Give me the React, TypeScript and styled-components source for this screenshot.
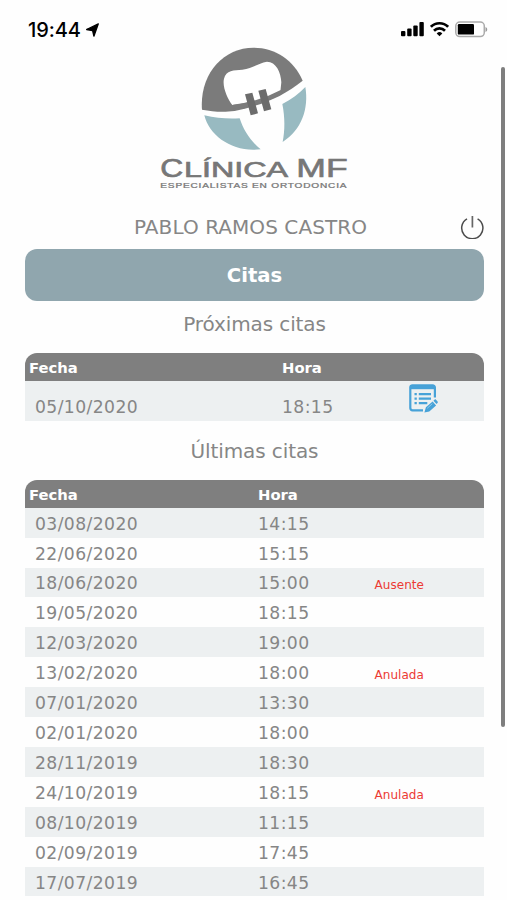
import React from 'react';
import styled, { createGlobalStyle } from 'styled-components';

const GlobalStyle = createGlobalStyle`
  * { box-sizing: border-box; }
  html, body { margin: 0; padding: 0; background: #fefefe; }
  body { font-family: "DejaVu Sans", Verdana, sans-serif; color: #868686; overflow: hidden; }
`;

const Screen = styled.div`
  position: relative;
  width: 507px;
  height: 900px;
  overflow: hidden;
  display: flex;
  flex-direction: column;
  background: #fefefe;
`;

const StatusBar = styled.header`
  display: flex;
  justify-content: space-between;
  align-items: center;
  height: 40px;
  padding: 18px 19px 0 28px;
  flex: none;
`;

const Clock = styled.div`
  display: flex;
  align-items: center;
  gap: 5px;
  padding-top: 1px;
  color: #000;
  font: 500 20px/22px Inter, "Liberation Sans", sans-serif;
  letter-spacing: -0.1px;
`;

const StatusIcons = styled.div`
  display: flex;
  align-items: center;
  gap: 6px;
`;

const Logo = styled.svg`
  display: block;
  flex: none;
  width: 220px;
  height: 150px;
  margin-left: 140px;
`;

const Content = styled.main`
  display: flex;
  flex-direction: column;
  width: 459px;
  margin-left: 25px;
`;

const UserRow = styled.div`
  display: flex;
  align-items: center;
  height: 59px;
  padding-top: 15px;
`;

const UserName = styled.div`
  flex: 1;
  padding-left: 109px;
  font-size: 20px;
  line-height: 24px;
  letter-spacing: 0.07px;
  white-space: nowrap;
`;

const PowerButton = styled.button`
  width: 24px;
  height: 24px;
  padding: 0;
  border: 0;
  background: none;
  line-height: 0;
`;

const Banner = styled.h1`
  margin: 0;
  height: 52px;
  padding-top: 1px;
  border-radius: 12px;
  background: #90a6ae;
  color: #fff;
  font-size: 19.6px;
  line-height: 52px;
  text-align: center;
`;

const SectionTitle = styled.h2<{ $height: number; $top: number }>`
  margin: 0;
  height: ${(p) => p.$height}px;
  padding-top: ${(p) => p.$top}px;
  font-size: 20px;
  font-weight: 400;
  line-height: 24px;
  letter-spacing: -0.1px;
  text-align: center;
`;

const Table = styled.div<{ $columns: string }>`
  display: grid;
  grid-template-columns: ${(p) => p.$columns};
`;

const HeadRow = styled.div`
  display: grid;
  grid-column: 1 / -1;
  grid-template-columns: subgrid;
  align-items: center;
  height: 27.5px;
  padding: 2px 0 0 4px;
  border-radius: 12px 12px 0 0;
  background: #7f7f7f;
  color: #fff;
  font-size: 14.8px;
  font-weight: 700;
  line-height: 20px;
`;

const Row = styled.div<{ $shaded: boolean; $height: number }>`
  display: grid;
  grid-column: 1 / -1;
  grid-template-columns: subgrid;
  align-items: center;
  height: ${(p) => p.$height}px;
  padding-top: 2px;
  background: ${(p) => (p.$shaded ? '#edf0f1' : 'transparent')};
  font-size: 17.2px;
  line-height: 22px;
  letter-spacing: 0.4px;
`;

const DateCell = styled.span`
  padding-left: 10px;
`;

const TimeCell = styled.span``;

const StatusCell = styled.span`
  padding: 4px 0 0 0.5px;
  color: #ec3a34;
  font-size: 12px;
  letter-spacing: 0.05px;
`;

const EditCell = styled.span`
  line-height: 0;
  align-self: start;
  padding-top: 1px;
`;

const ScrollThumb = styled.div`
  position: absolute;
  top: 67px;
  left: 501px;
  width: 4px;
  height: 660px;
  border-radius: 2px;
  background: #7e7e7e;
`;

const UpcomingDate = styled(DateCell)`
  padding-top: 11px;
`;

const UpcomingTime = styled(TimeCell)`
  padding-top: 11px;
`;

const pastVisits: Array<[string, string, string?]> = [
  ['03/08/2020', '14:15'],
  ['22/06/2020', '15:15'],
  ['18/06/2020', '15:00', 'Ausente'],
  ['19/05/2020', '18:15'],
  ['12/03/2020', '19:00'],
  ['13/02/2020', '18:00', 'Anulada'],
  ['07/01/2020', '13:30'],
  ['02/01/2020', '18:00'],
  ['28/11/2019', '18:30'],
  ['24/10/2019', '18:15', 'Anulada'],
  ['08/10/2019', '11:15'],
  ['02/09/2019', '17:45'],
  ['17/07/2019', '16:45'],
];

const LocationArrow = () => (
  <svg width="13" height="14" viewBox="0 0 13 14">
    <path d="M12.3.9 7.9 13.2 6.6 7.7.6 6.5z" fill="#000" stroke="#000" strokeWidth="1.3" strokeLinejoin="round" />
  </svg>
);

const SignalIcon = () => (
  <svg width="23" height="16" viewBox="0 0 23 16">
    <rect x="0" y="10" width="4.4" height="5.3" rx="1" />
    <rect x="6.2" y="7.5" width="4.4" height="7.8" rx="1" />
    <rect x="12.3" y="4.4" width="4.4" height="10.9" rx="1" />
    <rect x="18.4" y="1" width="4.4" height="14.3" rx="1" />
  </svg>
);

const WifiIcon = () => (
  <svg width="19" height="16" viewBox="0 0 19 16" fill="none" stroke="#000" strokeWidth="2.7">
    <path d="M.9 5.8a12.2 12.2 0 0 1 17.2 0" />
    <path d="M4 9.7a7.8 7.8 0 0 1 11 0" />
    <path d="M9.5 15.2 6.7 12.4a4 4 0 0 1 5.6 0z" fill="#000" stroke="none" />
  </svg>
);

const BatteryIcon = () => (
  <svg width="33" height="17" viewBox="0 0 33 17">
    <rect x=".8" y="1" width="28.5" height="14.6" rx="4" fill="none" stroke="#aaa" strokeWidth="1.5" />
    <rect x="2.8" y="3" width="16.2" height="10.6" rx="1.2" />
    <path d="M30.5 6v5c2.3-.8 2.3-4.2 0-5z" fill="#999" />
  </svg>
);

const ClinicLogo = () => (
  <Logo viewBox="0 0 660 450">
    <path
      d="M186 209C178 105 247 23 341 23c63 0 121 37 147 99-60 48-122 74-204 91-40 5-67 1-98-4z"
      fill="#7b7b7b"
    />
    <path
      d="M277 195C263 178 246 140 252 116c6-26 30-25 55-27 31-3 47-20 74-24 27 0 42 32 43 62l-3 28c-48 24-92 34-144 40z"
      fill="#fff"
    />
    <path
      d="M280 200c56-6 100-21 145-45"
      fill="none"
      stroke="#7b7b7b"
      strokeWidth="12"
    />
    <path d="M315 163l22-5 17 62-22 6zM355 152l22-5 17 61-22 6z" fill="#6c6c6c" />
    <path d="M193 226c36 8 67 11 106 9 12 36 31 67 63 93-81 11-154-39-169-102z" fill="#98bac1" />
    <path d="M427 192c28-14 50-31 69-51 11 65-11 128-68 165 7-35 7-73-1-114z" fill="#98bac1" />
    <g fill="#777" stroke="#777" fontFamily='"Liberation Sans", Arial, sans-serif'>
      <g strokeWidth="2">
        <text x="61" y="412" fontSize="77" textLength="69" lengthAdjust="spacingAndGlyphs">C</text>
        <text x="132" y="412" fontSize="67" textLength="312" lengthAdjust="spacingAndGlyphs">LÍNICA</text>
        <text x="469" y="412" fontSize="78" textLength="154" lengthAdjust="spacingAndGlyphs">MF</text>
      </g>
      <text x="61" y="443" fontSize="19" strokeWidth="0.7" letterSpacing="1.5" textLength="561" lengthAdjust="spacingAndGlyphs">ESPECIALISTAS EN ORTODONCIA</text>
    </g>
  </Logo>
);

const PowerIcon = () => (
  <svg width="24" height="24" viewBox="0 0 24 24" fill="none" stroke="#4c4c4c" strokeWidth="1.5">
    <path d="M7 3.9a10.6 10.6 0 1 0 10.6 0" />
    <path d="M12.4 1v11.5" stroke="#666" strokeWidth="1.7" />
  </svg>
);

const EditIcon = () => (
  <svg width="29" height="30" viewBox="0 0 29 30" fill="none" stroke="#47a2d8">
    <path d="M14 26.3H3.5A2.2 2.2 0 0 1 1.3 24V3.2A2.2 2.2 0 0 1 3.5 1.3h20.2a2.2 2.2 0 0 1 2.2 2.2v10" strokeWidth="2.2" />
    <path d="M1.5 3.2h24.2" strokeWidth="4" />
    <path d="M9.8 10.2H22M9.8 14.7H22M9.8 19.2h8.5" strokeWidth="2.2" />
    <path d="M5.5 10.2h2.3M5.5 14.7h2.3M5.5 19.2h2.3" strokeWidth="2.2" />
    <path d="m15.4 28.6 1.5-5.3 6.7-5.8 3.5 4-6.8 6zM24.4 16.7l1.1-1c.6-.5 1.1-.4 1.5.1l1.6 1.8c.4.5.4 1-.1 1.4l-1 .9z" fill="#47a2d8" stroke="none" />
    <path d="m18.2 24.3 5.2-4.6" stroke="#aad5ed" strokeWidth=".7" />
  </svg>
);

export default function App() {
  return (
    <>
      <GlobalStyle />
      <Screen>
        <StatusBar>
          <Clock>
            19:44
            <LocationArrow />
          </Clock>
          <StatusIcons>
            <SignalIcon />
            <WifiIcon />
            <BatteryIcon />
          </StatusIcons>
        </StatusBar>
        <ClinicLogo />
        <Content>
          <UserRow>
            <UserName>PABLO RAMOS CASTRO</UserName>
            <PowerButton aria-label="Salir">
              <PowerIcon />
            </PowerButton>
          </UserRow>
          <Banner>Citas</Banner>
          <SectionTitle $height={52} $top={11}>Próximas citas</SectionTitle>
          <Table $columns="257px 127px 1fr">
            <HeadRow>
              <span>Fecha</span>
              <span>Hora</span>
            </HeadRow>
            <Row $shaded $height={40}>
              <UpcomingDate>05/10/2020</UpcomingDate>
              <UpcomingTime>18:15</UpcomingTime>
              <EditCell>
                <EditIcon />
              </EditCell>
            </Row>
          </Table>
          <SectionTitle $height={59.7} $top={18}>Últimas citas</SectionTitle>
          <Table $columns="233px 116px 1fr">
            <HeadRow>
              <span>Fecha</span>
              <span>Hora</span>
            </HeadRow>
            {pastVisits.map(([date, time, status], i) => (
              <Row key={date} $shaded={i % 2 === 0} $height={29.91}>
                <DateCell>{date}</DateCell>
                <TimeCell>{time}</TimeCell>
                {status && <StatusCell>{status}</StatusCell>}
              </Row>
            ))}
          </Table>
        </Content>
        <ScrollThumb />
      </Screen>
    </>
  );
}
